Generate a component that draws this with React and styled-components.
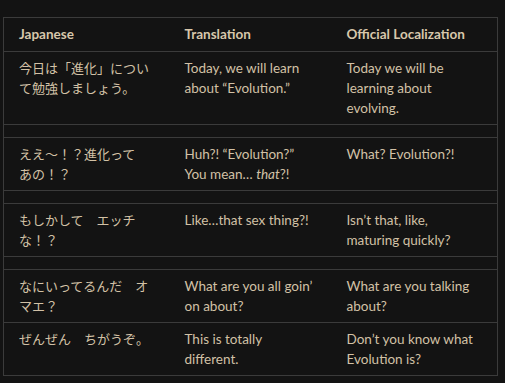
import styled, { createGlobalStyle } from "styled-components";

const GlobalStyle = createGlobalStyle`
  html, body {
    margin: 0;
    padding: 0;
    background: #131313;
  }
`;

const Page = styled.div`
  padding: 17px 8px 0 3px;
  font-family: Lato, "Noto Sans CJK JP", sans-serif;
  font-size: 13.5px;
  line-height: 20px;
  color: #d2c1a6;
`;

const Table = styled.table`
  width: 495px;
  border-collapse: collapse;
  border: 1px solid #3b3b3b;
  table-layout: fixed;
`;

const HeadCell = styled.th`
  box-sizing: border-box;
  width: ${(p) => p.w}px;
  text-align: left;
  font-weight: 700;
  color: #d8c7ab;
  padding: 6px 15px 7px;
  border-bottom: 1px solid #3b3b3b;
`;

const Row = styled.tr`
  border-top: 1px solid #3b3b3b;
`;

const Cell = styled.td`
  vertical-align: top;
  padding: 6px 15px;
`;

const Ja = styled.span`
  font-size: 13px;
`;

const SpacerCell = styled.td`
  padding: 6px 0;
  height: 0;
`;

const rows = [
  {
    ja: "今日は「進化」について勉強しましょう。",
    tr: "Today, we will learn about “Evolution.”",
    off: "Today we will be learning about evolving.",
  },
  null,
  {
    ja: (
      <>
        ええ～！？進化って
        <br />
        あの！？
      </>
    ),
    tr: (
      <>
        Huh?! “Evolution?” You mean… <em>that</em>?!
      </>
    ),
    off: "What? Evolution?!",
  },
  null,
  {
    ja: "もしかして　エッチな！？",
    tr: "Like…that sex thing?!",
    off: "Isn’t that, like, maturing quickly?",
  },
  null,
  {
    ja: "なにいってるんだ　オマエ？",
    tr: "What are you all goin’ on about?",
    off: "What are you talking about?",
  },
  {
    ja: "ぜんぜん　ちがうぞ。",
    tr: "This is totally different.",
    off: "Don’t you know what Evolution is?",
  },
];

export default function App() {
  return (
    <>
      <GlobalStyle />
      <Page>
        <Table>
          <thead>
            <tr>
              <HeadCell w={166}>Japanese</HeadCell>
              <HeadCell w={162}>Translation</HeadCell>
              <HeadCell w={166}>Official Localization</HeadCell>
            </tr>
          </thead>
          <tbody>
            {rows.map((r, i) =>
              r ? (
                <Row key={i}>
                  <Cell>
                    <Ja>{r.ja}</Ja>
                  </Cell>
                  <Cell>{r.tr}</Cell>
                  <Cell>{r.off}</Cell>
                </Row>
              ) : (
                <Row key={i}>
                  <SpacerCell colSpan={3} />
                </Row>
              )
            )}
          </tbody>
        </Table>
      </Page>
    </>
  );
}
